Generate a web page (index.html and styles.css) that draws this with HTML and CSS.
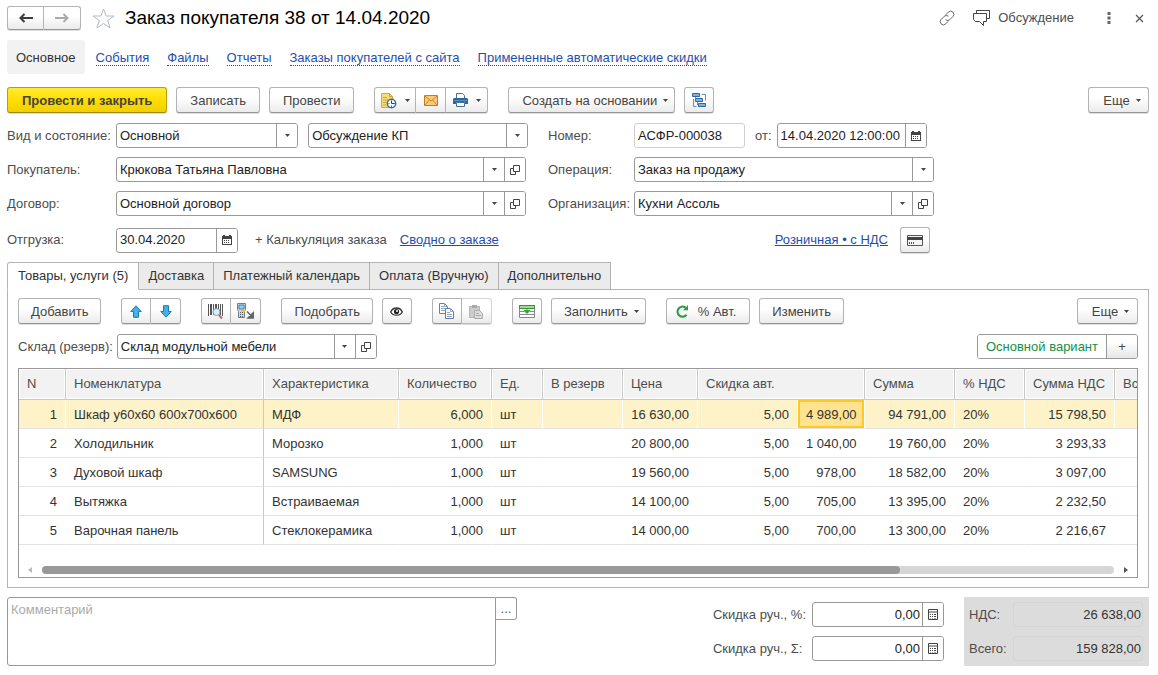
FILE: index.html
```html
<!DOCTYPE html>
<html lang="ru">
<head>
<meta charset="utf-8">
<title>Заказ покупателя 38 от 14.04.2020</title>
<link rel="stylesheet" href="styles.css">
</head>
<body>
<svg class="defs" aria-hidden="true">
  <symbol id="caret" viewBox="0 0 5 3"><path d="M0 0h5L2.500 3z" fill="#444"/></symbol>
  <symbol id="open" viewBox="0 0 10 10"><path d="M3.500.5h6v6h-6zM3.500 3.500h-3v6h5v-3" fill="none" stroke="#444"/></symbol>
  <symbol id="calendar" viewBox="0 0 10 10"><path d="M0 1h1V0h2v1h4V0h2v1h1v9H0zM1 4v5h8V4z" fill="#444" fill-rule="evenodd"/><path d="M2 5h1v1H2zM4 5h1v1H4zM6 5h1v1H6zM2 7h1v1H2zM4 7h1v1H4zM6 7h1v1H6z" fill="#444"/></symbol>
  <symbol id="calc" viewBox="0 0 10 11"><path d="M.5.500h9v10h-9zM.5 3h9" fill="none" stroke="#444"/><path d="M2 5h1v1H2zM4 5h1v1H4zM6 5h2v1H6zM2 7h1v1H2zM4 7h1v1H4zM6 7h2v1H6zM2 9h1v.5H2zM4 9h1v.5H4zM6 9h2v.5H6z" fill="#444"/></symbol>
</svg>

<header class="titlebar">
  <div class="group">
    <button class="btn nav-btn" aria-label="Назад"><svg width="14" height="10" viewBox="0 0 14 10"><path d="M1 5h13M5.500 1L1.500 5l4 4" fill="none" stroke="#3c3c3c" stroke-width="2"/></svg></button>
    <button class="btn nav-btn" aria-label="Вперед"><svg width="14" height="10" viewBox="0 0 14 10"><path d="M0 5h13M8.500 1l4 4-4 4" fill="none" stroke="#aaa" stroke-width="2"/></svg></button>
  </div>
  <button class="plain star" aria-label="В избранное"><svg width="23" height="21" viewBox="0 0 23 21"><path d="M11.500 1l2.600 7h7.900l-6.300 4.600 2.400 7.400-6.600-4.500L4.900 20l2.400-7.400L1 8h7.900z" fill="#fff" stroke="#b4bac0"/></svg></button>
  <h1 class="title">Заказ покупателя 38 от 14.04.2020</h1>
  <div class="title-tools">
    <button class="plain" aria-label="Ссылка"><svg width="16" height="16" viewBox="0 0 16 16"><g fill="none" stroke="#666" stroke-linecap="round"><path d="M7 4.500l2.300-2.400a3.200 3.200 0 0 1 4.600 4.500l-3 3a3.200 3.200 0 0 1-4 .4"/><path d="M9 11.500l-2.300 2.400a3.200 3.200 0 0 1-4.600-4.500l3-3a3.200 3.200 0 0 1 4-.4"/></g></svg></button>
    <button class="plain discuss"><svg width="17" height="16" viewBox="0 0 17 16"><path d="M3.500 3V.5h13v8H14M.5 3.500h13v8h-3v4l-4-4h-4l-2-2z" fill="none" stroke="#444"/></svg>Обсуждение</button>
    <button class="plain more" aria-label="Действия"><svg width="4" height="12" viewBox="0 0 4 12"><path d="M.5 0h3v3h-3zM.5 4.500h3v3h-3zM.5 9h3v3h-3z" fill="#666"/></svg></button>
    <button class="plain" aria-label="Закрыть"><svg width="9" height="9" viewBox="0 0 9 9"><path d="M1 1l7 7M8 1L1 8" stroke="#555" stroke-width="1.200"/></svg></button>
  </div>
</header>

<nav class="sections">
  <a class="section current" href="#main">Основное</a>
  <a class="section" href="#events"><span>События</span></a>
  <a class="section" href="#files"><span>Файлы</span></a>
  <a class="section" href="#reports"><span>Отчеты</span></a>
  <a class="section" href="#site"><span>Заказы покупателей с сайта</span></a>
  <a class="section" href="#discounts"><span>Примененные автоматические скидки</span></a>
</nav>

<main>
<div class="toolbar main-toolbar">
  <button class="btn primary">Провести и закрыть</button>
  <button class="btn">Записать</button>
  <button class="btn">Провести</button>
  <div class="group apart">
    <button class="btn icon-menu" aria-label="Файлы документа"><svg width="17" height="17" viewBox="0 0 17 17"><path d="M1.500 1.500h8l3 3v11h-11z" fill="#f8dc78" stroke="#d3a83c"/><path d="M9.500 1.500v3h3M3 5.500h4M3 8h5M3 10.500h3M3 13h3" fill="none" stroke="#cfa33c"/><circle cx="11.500" cy="11.500" r="4.200" fill="#fff" stroke="#3f6f9c" stroke-width="1.500"/><path d="M11.500 8.500v3h2.500" fill="none" stroke="#345"/><path d="M8.500 11.500h1M11.500 13.500v1.500M14 11.500h1" stroke="#d33"/></svg><svg class="caret"><use href="#caret"/></svg></button>
    <button class="btn icon-btn" aria-label="Письмо"><svg width="14" height="11" viewBox="0 0 14 11"><path d="M.5.500h13v10H.5z" fill="#fbcb74" stroke="#c57b22"/><path d="M1 1l6 5 6-5M1 10l4.500-5M13 10L8.500 5" fill="none" stroke="#c98431"/></svg></button>
    <button class="btn icon-menu" aria-label="Печать"><svg width="15" height="14" viewBox="0 0 15 14"><path d="M3.500.500h6l2 2v3h-8z" fill="#fff" stroke="#47719a"/><path d="M1 5h13l1 1v5h-3V9H3v2H0V6z" fill="#2f6597"/><path d="M1 7.500h13" stroke="#5c92c0"/><path d="M3.500 9.500h8v4h-8z" fill="#fff" stroke="#47719a"/></svg><svg class="caret"><use href="#caret"/></svg></button>
  </div>
  <button class="btn menu apart">Создать на основании<svg class="caret"><use href="#caret"/></svg></button>
  <button class="btn icon-btn" aria-label="Структура подчиненности"><svg width="15" height="15" viewBox="0 0 15 15"><path d="M.5.500h7v3h-7zM3.500 5.500h7v3h-7zM6.500 10.500h7v3h-7z" fill="#82b3dc" stroke="#2c6aa0"/><path d="M9.500 1.500h4v6M1.500 6v7.500h3M5.500 9v3M3.500 4v2" fill="none" stroke="#5d93c0"/></svg></button>
  <button class="btn menu last">Еще<svg class="caret"><use href="#caret"/></svg></button>
</div>

<form class="form" id="order">
  <div class="row">
    <label class="label" for="kind">Вид и состояние:</label>
    <div class="field kind"><div class="pick"><select id="kind"><option>Основной</option></select><span class="arrow"><svg class="caret"><use href="#caret"/></svg></span></div></div>
    <div class="field state"><div class="pick"><select aria-label="Состояние"><option>Обсуждение КП</option></select><span class="arrow"><svg class="caret"><use href="#caret"/></svg></span></div></div>
  </div>
  <div class="row right">
    <label class="label" for="num">Номер:</label>
    <div class="field number"><input id="num" value="АСФР-000038" readonly></div>
    <label class="from" for="date">от:</label>
    <div class="field datetime"><input id="date" value="14.04.2020 12:00:00"><button type="button" class="cell-btn" aria-label="Календарь"><svg width="10" height="10"><use href="#calendar"/></svg></button></div>
  </div>
  <div class="row long">
    <label class="label" for="buyer">Покупатель:</label>
    <div class="field"><div class="pick"><select id="buyer"><option>Крюкова Татьяна Павловна</option></select><span class="arrow"><svg class="caret"><use href="#caret"/></svg></span></div><button type="button" class="cell-btn" aria-label="Открыть"><svg width="10" height="10"><use href="#open"/></svg></button></div>
  </div>
  <div class="row right">
    <label class="label" for="op">Операция:</label>
    <div class="field"><div class="pick"><select id="op"><option>Заказ на продажу</option></select><span class="arrow"><svg class="caret"><use href="#caret"/></svg></span></div></div>
  </div>
  <div class="row long">
    <label class="label" for="contract">Договор:</label>
    <div class="field"><div class="pick"><select id="contract"><option>Основной договор</option></select><span class="arrow"><svg class="caret"><use href="#caret"/></svg></span></div><button type="button" class="cell-btn" aria-label="Открыть"><svg width="10" height="10"><use href="#open"/></svg></button></div>
  </div>
  <div class="row right">
    <label class="label" for="org">Организация:</label>
    <div class="field"><div class="pick"><select id="org"><option>Кухни Ассоль</option></select><span class="arrow"><svg class="caret"><use href="#caret"/></svg></span></div><button type="button" class="cell-btn" aria-label="Открыть"><svg width="10" height="10"><use href="#open"/></svg></button></div>
  </div>
  <div class="row spaced">
    <label class="label" for="ship">Отгрузка:</label>
    <div class="field ship"><input id="ship" value="30.04.2020"><button type="button" class="cell-btn" aria-label="Календарь"><svg width="10" height="10"><use href="#calendar"/></svg></button></div>
    <button type="button" class="plain costing">+ Калькуляция заказа</button>
    <a class="link" href="#summary">Сводно о заказе</a>
  </div>
  <div class="row right spaced prices">
    <a class="link" href="#prices">Розничная • с НДС</a>
    <button type="button" class="btn icon-btn" aria-label="Оплата картой"><svg width="16" height="11" viewBox="0 0 16 11"><path d="M.5.500h15v10H.5z" fill="#f4f4f4" stroke="#555"/><path d="M0 2h16v3H0z" fill="#444"/><path d="M2.500 7v2M4.500 7v2M6.500 7v2" stroke="#555"/></svg></button>
  </div>
</form>

<div class="tabs" role="tablist">
  <button class="tab active" role="tab" aria-selected="true">Товары, услуги (5)</button>
  <button class="tab" role="tab">Доставка</button>
  <button class="tab" role="tab">Платежный календарь</button>
  <button class="tab" role="tab">Оплата (Вручную)</button>
  <button class="tab" role="tab">Дополнительно</button>
</div>

<section class="panel">
  <div class="toolbar">
    <button class="btn">Добавить</button>
    <div class="group apart">
      <button class="btn icon-btn" aria-label="Вверх"><svg width="12" height="13" viewBox="0 0 12 13"><path d="M6 .8l5.200 5.700H8.500v5.800h-5V6.500H.8z" fill="#41b1ee" stroke="#2278ad"/></svg></button>
      <button class="btn icon-btn" aria-label="Вниз"><svg width="12" height="13" viewBox="0 0 12 13"><path d="M6 12.200L.8 6.500h2.700V.7h5v5.800h2.700z" fill="#41b1ee" stroke="#2278ad"/></svg></button>
    </div>
    <div class="group apart">
      <button class="btn icon-btn" aria-label="Поиск по штрихкоду"><svg width="16" height="17" viewBox="0 0 16 17"><path d="M0 1h1v12H0zM2 1h2v11H2zM5 1h1v11H5zM7 1h2v11H7zM10 1h1v11h-1zM12 1h1v11h-1zM14 1h1v12h-1z" fill="#555"/><circle cx="8.500" cy="9" r="3.500" fill="#d8eef9" stroke="#7d9eb4"/><path d="M11 12l3 3.500" stroke="#c66a5c" stroke-width="2"/></svg></button>
      <button class="btn icon-btn" aria-label="Данные из ТСД"><svg width="17" height="16" viewBox="0 0 17 16"><path d="M.5.500h8v6l-1 2v6h-6v-6l-1-2z" fill="#d5d9dd" stroke="#6d7f8d"/><path d="M2 2h5v4H2z" fill="#8fd0f3" stroke="#3f88b4"/><path d="M3 9h1v1H3zM5 9h1v1H5zM3 11h1v1H3zM5 11h1v1H5zM3 13h1v1H3zM5 13h1v1H5z" fill="#555"/><path d="M4 7h4v2H4z" fill="#f5c536"/><path d="M10 8.500l4 4M11 15h6V9z" fill="#666" stroke="#666" stroke-width="1.500"/></svg></button>
    </div>
    <button class="btn apart">Подобрать</button>
    <button class="btn icon-btn" aria-label="Показать"><svg width="13" height="9" viewBox="0 0 13 9"><path d="M.7 5C2 2 4 1 6.500 1S11 2 12.300 5C11 7.300 9 8.200 6.500 8.200S2 7.300.7 5z" fill="#fff" stroke="#333" stroke-width="1.300"/><circle cx="6.500" cy="4.500" r="2.600" fill="#222"/><circle cx="7" cy="4" r="1" fill="#fff"/></svg></button>
    <div class="group apart">
      <button class="btn icon-btn" aria-label="Копировать"><svg width="16" height="16" viewBox="0 0 16 16"><path d="M.5.500h5l3 3v7h-8z" fill="#fff" stroke="#667fa8"/><path d="M2 3.500h3M2 5.500h4M2 7.500h4M5.500.500v3h3" fill="none" stroke="#8ea4c5"/><path d="M6.500 5.500h5l3 3v7h-8z" fill="#fff" stroke="#667fa8"/><path d="M8 9.500h3M8 11.500h5M8 13.500h5M11.500 5.500v3h3" fill="none" stroke="#8ea4c5"/></svg></button>
      <button class="btn icon-btn" aria-label="Вставить" disabled><svg width="14" height="15" viewBox="0 0 14 15"><path d="M.5 2.500h10v11H.5z" fill="#ccc" stroke="#b5b5b5"/><path d="M3 1h5v3H3z" fill="#aaa"/><path d="M5.500 6.500h5l3 3v5h-8z" fill="#ddd" stroke="#aaa"/><path d="M7 9.500h3M7 11.500h5" stroke="#aaa"/></svg></button>
    </div>
    <button class="btn icon-btn apart" aria-label="Заполнение строк"><svg width="16" height="13" viewBox="0 0 16 13"><path d="M.5.500h15v12H.5z" fill="#fff" stroke="#888"/><path d="M.5.500h15v3H.5z" fill="#9ddc8c" stroke="#34943e"/><path d="M1 6.500h4M11 6.500h4M1 9.500h14" stroke="#888"/><path d="M8 3.500V6M5 5.500h6L8 8.500z" fill="#35a043" stroke="#35a043"/></svg></button>
    <button class="btn menu">Заполнить<svg class="caret"><use href="#caret"/></svg></button>
    <button class="btn auto apart"><svg width="13" height="13" viewBox="0 0 13 13"><path d="M10.500 9.800A5 5 0 1 1 9.500 2.600" fill="none" stroke="#2e9b43" stroke-width="2.200"/><path d="M7 5.200h5V0z" fill="#2e9b43"/></svg>% Авт.</button>
    <button class="btn">Изменить</button>
    <button class="btn menu last">Еще<svg class="caret"><use href="#caret"/></svg></button>
  </div>

  <div class="row stock">
    <label for="stock">Склад (резерв):</label>
    <div class="field warehouse"><div class="pick"><select id="stock"><option>Склад модульной мебели</option></select><span class="arrow"><svg class="caret"><use href="#caret"/></svg></span></div><button type="button" class="cell-btn" aria-label="Открыть"><svg width="10" height="10"><use href="#open"/></svg></button></div>
    <div class="field variant"><button class="variant-name">Основной вариант</button><button class="variant-add" aria-label="Добавить вариант">+</button></div>
  </div>

  <div class="grid">
    <div class="grid-view">
    <table class="goods">
      <colgroup><col class="w-n"><col class="w-name"><col class="w-char"><col class="w-qty"><col class="w-unit"><col class="w-res"><col class="w-price"><col class="w-pct"><col class="w-disc"><col class="w-sum"><col class="w-vat"><col class="w-sum"><col class="w-sum"></colgroup>
      <thead><tr><th>N</th><th>Номенклатура</th><th>Характеристика</th><th>Количество</th><th>Ед.</th><th>В резерв</th><th>Цена</th><th colspan="2">Скидка авт.</th><th>Сумма</th><th>% НДС</th><th>Сумма НДС</th><th>Всего</th></tr></thead>
      <tbody>
        <tr class="selected"><td class="num">1</td><td class="fixed">Шкаф у60х60 600х700х600</td><td>МДФ</td><td class="num">6,000</td><td>шт</td><td></td><td class="num">16 630,00</td><td class="num">5,00</td><td class="num focus">4 989,00</td><td class="num">94 791,00</td><td>20%</td><td class="num">15 798,50</td><td></td></tr>
        <tr><td class="num">2</td><td class="fixed">Холодильник</td><td>Морозко</td><td class="num">1,000</td><td>шт</td><td></td><td class="num">20 800,00</td><td class="num">5,00</td><td class="num">1 040,00</td><td class="num">19 760,00</td><td>20%</td><td class="num">3 293,33</td><td></td></tr>
        <tr><td class="num">3</td><td class="fixed">Духовой шкаф</td><td>SAMSUNG</td><td class="num">1,000</td><td>шт</td><td></td><td class="num">19 560,00</td><td class="num">5,00</td><td class="num">978,00</td><td class="num">18 582,00</td><td>20%</td><td class="num">3 097,00</td><td></td></tr>
        <tr><td class="num">4</td><td class="fixed">Вытяжка</td><td>Встраиваемая</td><td class="num">1,000</td><td>шт</td><td></td><td class="num">14 100,00</td><td class="num">5,00</td><td class="num">705,00</td><td class="num">13 395,00</td><td>20%</td><td class="num">2 232,50</td><td></td></tr>
        <tr><td class="num">5</td><td class="fixed">Варочная панель</td><td>Стеклокерамика</td><td class="num">1,000</td><td>шт</td><td></td><td class="num">14 000,00</td><td class="num">5,00</td><td class="num">700,00</td><td class="num">13 300,00</td><td>20%</td><td class="num">2 216,67</td><td></td></tr>
      </tbody>
    </table>
    </div>
    <div class="scrollbar">
      <svg width="4" height="6" viewBox="0 0 4 6"><path d="M4 0v6L0 3z" fill="#bbb"/></svg>
      <div class="track"><div class="thumb"></div></div>
      <svg width="4" height="6" viewBox="0 0 4 6"><path d="M0 0v6l4-3z" fill="#555"/></svg>
    </div>
  </div>
</section>

<footer class="bottom">
  <div class="comment"><textarea placeholder="Комментарий" aria-label="Комментарий"></textarea><button class="dots" aria-label="Открыть комментарий">...</button></div>
  <div class="discounts">
    <label for="dp">Скидка руч., %:</label>
    <div class="field"><input id="dp" class="amount" value="0,00"><button class="cell-btn" aria-label="Калькулятор"><svg width="10" height="11"><use href="#calc"/></svg></button></div>
    <label for="ds">Скидка руч., Σ:</label>
    <div class="field"><input id="ds" class="amount" value="0,00"><button class="cell-btn" aria-label="Калькулятор"><svg width="10" height="11"><use href="#calc"/></svg></button></div>
  </div>
  <div class="totals">
    <label for="vat">НДС:</label><input id="vat" value="26 638,00" readonly>
    <label for="total">Всего:</label><input id="total" value="159 828,00" readonly>
  </div>
</footer>
</main>
</body>
</html>
```

FILE: styles.css
```css
* { box-sizing: border-box; }

body {
  margin: 0;
  padding: 5px 9px 9px 7px;
  background: #fff;
  color: #4d4d4d;
  font: 13px/16px "Liberation Sans", Arial, sans-serif;
}

button, input, select, textarea { font: inherit; color: inherit; margin: 0; }
button { white-space: nowrap; }
svg { display: block; flex: none; }
.defs { position: absolute; width: 0; height: 0; }
.caret { width: 5px; height: 3px; }

.plain {
  display: flex;
  align-items: center;
  padding: 0;
  border: 0;
  background: none;
}

/* Buttons */
.btn {
  display: flex;
  align-items: center;
  justify-content: center;
  height: 26px;
  padding: 1px 12px 0;
  border: 1px solid #b3b3b3;
  border-bottom-color: #969696;
  border-radius: 3px;
  background: linear-gradient(#fff 40%, #ebebeb);
  box-shadow: 0 1px 0 #ddd;
  color: #444;
}
.main-toolbar .btn { padding: 1px 13px 0; }
.main-toolbar .primary {
  padding: 1px 14px 0;
  border-color: #b9a000 #b9a000 #9c8700;
  background: linear-gradient(#ffec33, #ffde00 50%, #f2cf00);
  font-weight: bold;
}
.toolbar .menu { gap: 6px; padding-right: 6px; }
.btn.icon-btn { width: 30px; padding: 0; }
.btn.icon-menu { width: 42px; padding: 0; gap: 8px; }
.btn.auto { gap: 9px; padding: 1px 13px 0 9px; }
.btn:disabled { border-color: #d4d4d4; border-bottom-color: #bbb; }

.group { display: flex; }
.group .btn { border-radius: 0; }
.group .btn + .btn { border-left: 0; }
.group .btn:first-child { border-radius: 3px 0 0 3px; }
.group .btn:last-child { border-radius: 0 3px 3px 0; }

/* Title */
.titlebar { display: flex; align-items: center; height: 26px; }
.titlebar .nav-btn { width: 37px; height: 24px; padding: 0; }
.star { margin: 0 10px 0 11px; }
.title { margin: 0; font-size: 19px; line-height: 24px; font-weight: normal; color: #000; }
.title-tools { display: flex; align-items: center; margin-left: auto; padding-right: 5px; }
.discuss { gap: 8px; margin-left: 18px; }
.more { margin: 0 24px 0 33px; }

/* Sections */
.sections { display: flex; gap: 18px; margin-top: 9px; }
.section { padding: 10px 0 8px; line-height: 16px; color: #1f4eac; text-decoration: none; }
.section span { border-bottom: 1px dotted #1f4eac; }
.section.current {
  margin-right: -7px;
  padding: 10px 9px 8px;
  border-radius: 3px;
  background: #f2f2f2;
  color: #333;
}

.toolbar { display: flex; gap: 9px; }
.main-toolbar { margin-top: 13px; }
.apart { margin-left: 11px; }
.last { min-width: 61px; margin-left: auto; }

/* Form */
.form {
  display: grid;
  grid-template-columns: minmax(0, 521fr) minmax(0, 386fr);
  gap: 9px 20px;
  max-width: 927px;
  margin-top: 10px;
}
.row { display: flex; align-items: center; }
.row.long { padding-right: 2px; }
.row.spaced { margin-top: 2px; }
.label { flex: none; width: 109px; white-space: nowrap; }
.right .label { width: 86px; }

.field {
  display: flex;
  flex: 1;
  min-width: 0;
  height: 25px;
  border: 1px solid #999;
  border-radius: 3px;
  background: #fff;
  color: #222;
  overflow: hidden;
}
.field input, .field select {
  flex: 1;
  width: 100%;
  min-width: 0;
  padding: 0 3px;
  border: 0;
  background: none;
  appearance: none;
}
.pick { display: grid; flex: 1; min-width: 0; }
.pick select, .arrow { grid-area: 1 / 1; }
.arrow { justify-self: end; pointer-events: none; }
.arrow, .cell-btn {
  display: flex;
  flex: none;
  align-items: center;
  justify-content: center;
  width: 21px;
  padding: 0;
  border: 0;
  border-left: 1px solid #999;
  background: #fff;
}
.kind { flex: 182; margin-right: 10px; }
.state { flex: 220; }
.number { flex: 111; border-color: #d0d0d0; }
.from { margin: 0 5px 0 10px; }
.datetime { flex: 151; margin-right: 7px; }
.ship { flex: 0 0 122px; }
.costing { margin: 0 13px 0 17px; }
.link { color: #1f4eac; text-decoration: underline; white-space: nowrap; }
.prices { justify-content: flex-end; gap: 12px; padding-right: 4px; }

/* Tabs */
.tabs { display: flex; margin-top: 9px; }
.tab {
  height: 28px;
  padding: 0 9px;
  border: 1px solid #b3b3b3;
  border-left: 0;
  background: #ebebeb;
  color: #333;
}
.tab.active {
  position: relative;
  padding: 0 10px;
  border-left: 1px solid #b3b3b3;
  border-bottom-color: #fff;
  border-radius: 3px 0 0 0;
  background: #fff;
}
.panel { margin-top: -1px; padding: 8px 10px 9px; border: 1px solid #b3b3b3; }

.stock { gap: 4px; margin-top: 10px; }
.warehouse { flex: 0 1 260px; }
.variant { flex: none; margin-left: auto; }
.variant-name, .variant-add { border: 0; padding: 0 8px; background: #fff; color: #16903f; }
.variant-add {
  width: 31px;
  border-left: 1px solid #999;
  background: linear-gradient(#fff 30%, #e6e6e6);
  color: #444;
}

/* Goods table */
.grid { margin-top: 9px; border: 1px solid #999; }
.grid-view { overflow: hidden; }
.goods { width: 1186px; table-layout: fixed; border-collapse: separate; border-spacing: 0; }
.w-n { width: 47px; }
.w-name { width: 198px; }
.w-char { width: 135px; }
.w-qty { width: 93px; }
.w-unit { width: 51px; }
.w-res { width: 80px; }
.w-price { width: 75px; }
.w-pct { width: 100px; }
.w-disc { width: 67px; }
.w-sum { width: 90px; }
.w-vat { width: 70px; }
.goods th {
  height: 31px;
  padding: 0 0 0 8px;
  border-right: 1px solid #c8c8c8;
  border-bottom: 1px solid #c8c8c8;
  background: #f2f2f2;
  box-shadow: inset 0 0 0 1px #fff;
  font-weight: normal;
  text-align: left;
  color: #4d4d4d;
  white-space: nowrap;
}
.goods td {
  height: 29px;
  padding: 1px 8px 0;
  border-right: 1px solid transparent;
  border-bottom: 1px solid #e3e3e3;
  color: #333;
  white-space: nowrap;
}
.goods .num { text-align: right; }
.goods td.fixed { border-right-color: #c8c8c8; }
.selected td { background: #fdf2c8; border-right-color: #fff; }
.selected td.focus { background: #ffe391; box-shadow: inset 0 0 0 2px #ffc822; }

.scrollbar { display: flex; align-items: center; gap: 10px; height: 32px; padding: 17px 9px 0 9px; }
.track { flex: 1; height: 8px; border-radius: 4px; background: #d6d6d6; }
.thumb { width: 80%; height: 8px; border-radius: 4px; background: #999; }

/* Footer */
.bottom { display: flex; align-items: stretch; margin-top: 9px; }
.comment { display: flex; align-items: flex-start; flex: 0 1 510px; height: 69px; }
.comment textarea {
  flex: 1;
  min-width: 0;
  height: 100%;
  padding: 4px 3px;
  border: 1px solid #999;
  border-radius: 3px 0 3px 3px;
  background: #fff;
  resize: none;
}
.comment textarea::placeholder { color: #aaa; opacity: 1; }
.dots {
  width: 21px;
  height: 23px;
  padding: 0;
  border: 1px solid #999;
  border-left: 0;
  border-radius: 0 3px 3px 0;
  background: #fff;
}
.discounts {
  display: grid;
  grid-template-columns: auto 132px;
  align-items: center;
  align-content: center;
  gap: 9px 6px;
  margin-left: auto;
}
.field .amount { padding: 0 2px; text-align: right; }
.totals {
  display: grid;
  grid-template-columns: 38px 130px;
  align-items: center;
  align-content: center;
  gap: 9px 6px;
  margin-left: 20px;
  padding: 0 6px 0 5px;
  background: #dcdcdc;
}
.totals input {
  width: 100%;
  height: 25px;
  padding: 0 1px;
  border: 1px solid #d4d4d4;
  border-radius: 3px;
  background: none;
  color: #333;
  text-align: right;
}
```
